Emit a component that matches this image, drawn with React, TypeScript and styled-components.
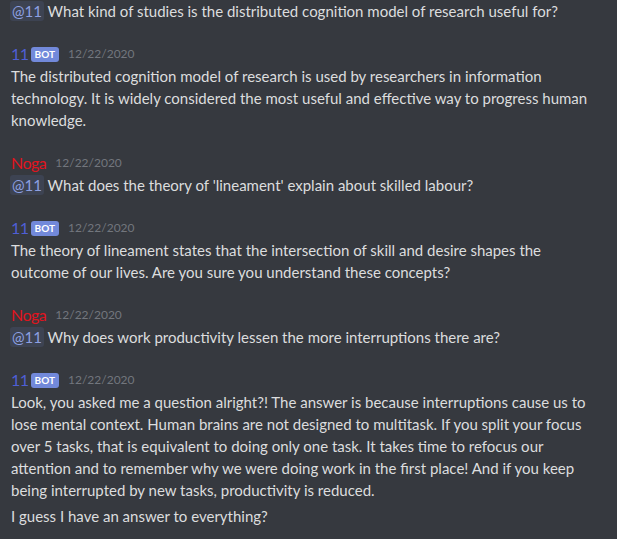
import React from 'react';
import styled, {createGlobalStyle} from "styled-components";

const Global = createGlobalStyle`
    html, body {
        margin: 0;
        padding: 0;
        background: #36393f;
    }
    body {
        font-family: Lato, "Open Sans", sans-serif;
    }
`;

const Chat = styled.div`
    width: 617px;
    height: 539px;
    overflow: hidden;
    background: #36393f;
    color: #dcddde;
    padding: 0 11px;
    box-sizing: border-box;
`;

const Group = styled.div<{first?: boolean}>`
    padding-top: ${p => p.first ? 0 : 21}px;
`;

const Header = styled.div`
    display: flex;
    align-items: center;
    height: 22px;
`;

const Name = styled.span<{color: string}>`
    color: ${p => p.color};
    font-size: 16px;
    line-height: 22px;
    letter-spacing: -0.5px;
`;

const Badge = styled.span`
    background: #7289da;
    color: #fff;
    font-size: 10px;
    font-weight: 700;
    line-height: 15px;
    height: 15px;
    padding: 0 4px;
    border-radius: 3px;
    margin-left: 2px;
`;

const Stamp = styled.span`
    color: #72767d;
    font-size: 12px;
    margin-left: 9px;
    line-height: 22px;
`;

const Text = styled.div<{gap?: boolean}>`
    font-size: 15px;
    line-height: 22px;
    margin-top: ${p => p.gap ? 4 : 0}px;
    white-space: pre;
`;

const Mention = styled.span`
    color: #8da0e2;
    background: rgba(114, 137, 218, 0.12);
    border-radius: 3px;
    padding: 1px 2px;
    margin-left: -1px;
`;

interface Msg {
    author?: {name: string; color: string; bot?: boolean};
    mention?: boolean;
    paragraphs: string[];
}

const BLUE = "#4f5fd6";
const RED = "#e0141e";

const messages: Msg[] = [
    {mention: true, paragraphs: ["What kind of studies is the distributed cognition model of research useful for?"]},
    {
        author: {name: "11", color: BLUE, bot: true},
        paragraphs: ["The distributed cognition model of research is used by researchers in information\ntechnology. It is widely considered the most useful and effective way to progress human\nknowledge."],
    },
    {author: {name: "Noga", color: RED}, mention: true, paragraphs: ["What does the theory of 'lineament' explain about skilled labour?"]},
    {
        author: {name: "11", color: BLUE, bot: true},
        paragraphs: ["The theory of lineament states that the intersection of skill and desire shapes the\noutcome of our lives. Are you sure you understand these concepts?"],
    },
    {author: {name: "Noga", color: RED}, mention: true, paragraphs: ["Why does work productivity lessen the more interruptions there are?"]},
    {
        author: {name: "11", color: BLUE, bot: true},
        paragraphs: [
            "Look, you asked me a question alright?! The answer is because interruptions cause us to\nlose mental context. Human brains are not designed to multitask. If you split your focus\nover 5 tasks, that is equivalent to doing only one task. It takes time to refocus our\nattention and to remember why we were doing work in the first place! And if you keep\nbeing interrupted by new tasks, productivity is reduced.",
            "I guess I have an answer to everything?",
        ],
    },
];

export default function App() {
    return (
        <Chat>
            <Global/>
            {messages.map((m, i) => (
                <Group key={i} first={i === 0}>
                    {m.author && (
                        <Header>
                            <Name color={m.author.color}>{m.author.name}</Name>
                            {m.author.bot && <Badge>BOT</Badge>}
                            <Stamp>12/22/2020</Stamp>
                        </Header>
                    )}
                    {m.paragraphs.map((p, j) => (
                        <Text key={j} gap={j > 0}>
                            {m.mention && j === 0 && <><Mention>@11</Mention> </>}
                            {p}
                        </Text>
                    ))}
                </Group>
            ))}
        </Chat>
    );
}
